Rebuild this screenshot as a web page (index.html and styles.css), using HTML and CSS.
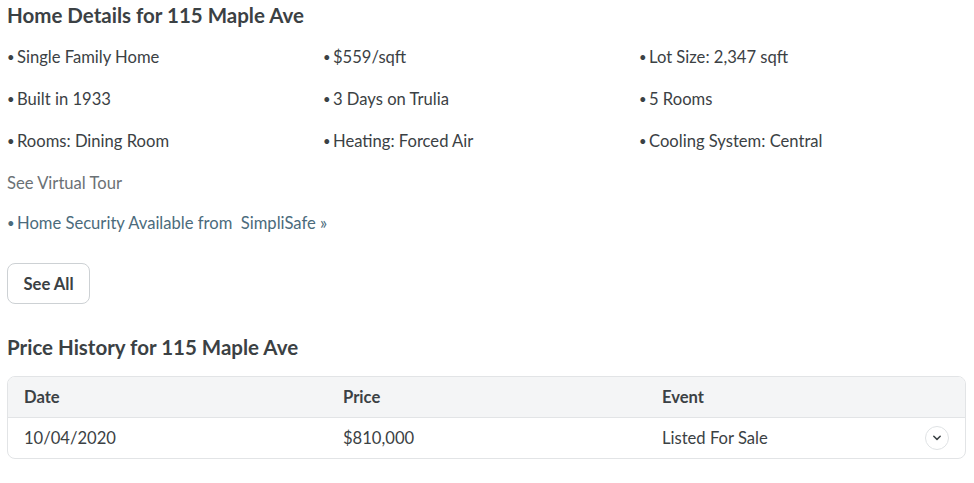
FILE: index.html
```html
<!DOCTYPE html>
<html>
<head>
<meta charset="utf-8">
<link rel="stylesheet" href="styles.css">
</head>
<body>
<div class="page">
  <h2 class="heading">Home Details for 115 Maple Ave</h2>
  <div class="facts">
    <div class="fact">Single Family Home</div>
    <div class="fact">$559/sqft</div>
    <div class="fact">Lot Size: 2,347 sqft</div>
    <div class="fact">Built in 1933</div>
    <div class="fact">3 Days on Trulia</div>
    <div class="fact">5 Rooms</div>
    <div class="fact">Rooms: Dining Room</div>
    <div class="fact">Heating: Forced Air</div>
    <div class="fact">Cooling System: Central</div>
  </div>
  <div class="tour">See Virtual Tour</div>
  <div class="security fact">Home Security Available from&nbsp; SimpliSafe »</div>
  <button class="see-all">See All</button>
  <h2 class="heading history-heading">Price History for 115 Maple Ave</h2>
  <div class="table">
    <div class="row head">
      <div class="cell">Date</div>
      <div class="cell">Price</div>
      <div class="cell">Event</div>
    </div>
    <div class="row">
      <div class="cell">10/04/2020</div>
      <div class="cell">$810,000</div>
      <div class="cell">Listed For Sale</div>
      <span class="chev"><svg width="10" height="6" viewBox="0 0 10 6"><path d="M1.8 1.3 L5 4.4 L8.2 1.3" fill="none" stroke="#3b4144" stroke-width="1.5" stroke-linecap="round" stroke-linejoin="round"/></svg></span>
    </div>
  </div>
</div>
</body>
</html>
```
FILE: styles.css
```css
* { box-sizing: border-box; }
body {
  margin: 0;
  background: #fff;
  font-family: Lato, "Noto Sans", sans-serif;
  color: #3b4144;
}
.page {
  padding: 2px 9px 0 7px;
  width: 974px;
}
.heading {
  margin: 0;
  font-size: 20.5px;
  font-weight: 700;
  line-height: 26px;
  color: #3b4144;
}
.facts {
  display: grid;
  grid-template-columns: 316px 316px 316px;
  margin-top: 17px;
  row-gap: 18px;
}
.fact, .tour, .security {
  font-size: 16.6px;
  line-height: 24px;
  height: 24px;
}
.fact::before {
  content: "•";
  display: inline-block;
  width: 10px;
  font-size: 13px;
  vertical-align: top;
  line-height: 24px;
}
.tour {
  margin-top: 18px;
  color: #6b7175;
}
.security {
  margin-top: 16px;
  color: #4b6b7c;
}
.see-all {
  margin-top: 28px;
  display: block;
  width: 83px;
  height: 41px;
  border: 1px solid #cdd1d4;
  border-radius: 8px;
  background: #fff;
  font-family: inherit;
  font-size: 16.6px;
  font-weight: 700;
  color: #3b4144;
  padding: 0;
}
.history-heading {
  margin-top: 30px;
}
.table {
  margin-top: 16px;
  border: 1px solid #e2e4e6;
  border-radius: 8px;
  width: 959px;
  overflow: hidden;
}
.row {
  display: grid;
  grid-template-columns: 1fr 1fr 1fr;
  height: 40px;
  align-items: center;
  position: relative;
  font-size: 16.6px;
}
.row.head {
  height: 41px;
  background: #f4f5f6;
  border-bottom: 1px solid #e2e4e6;
  font-weight: 700;
}
.cell {
  padding-left: 16px;
}
.chev {
  position: absolute;
  right: 16px;
  top: 8px;
  width: 24px;
  height: 24px;
  border: 1px solid #dfe2e4;
  border-radius: 50%;
  display: flex;
  align-items: center;
  justify-content: center;
}
```
